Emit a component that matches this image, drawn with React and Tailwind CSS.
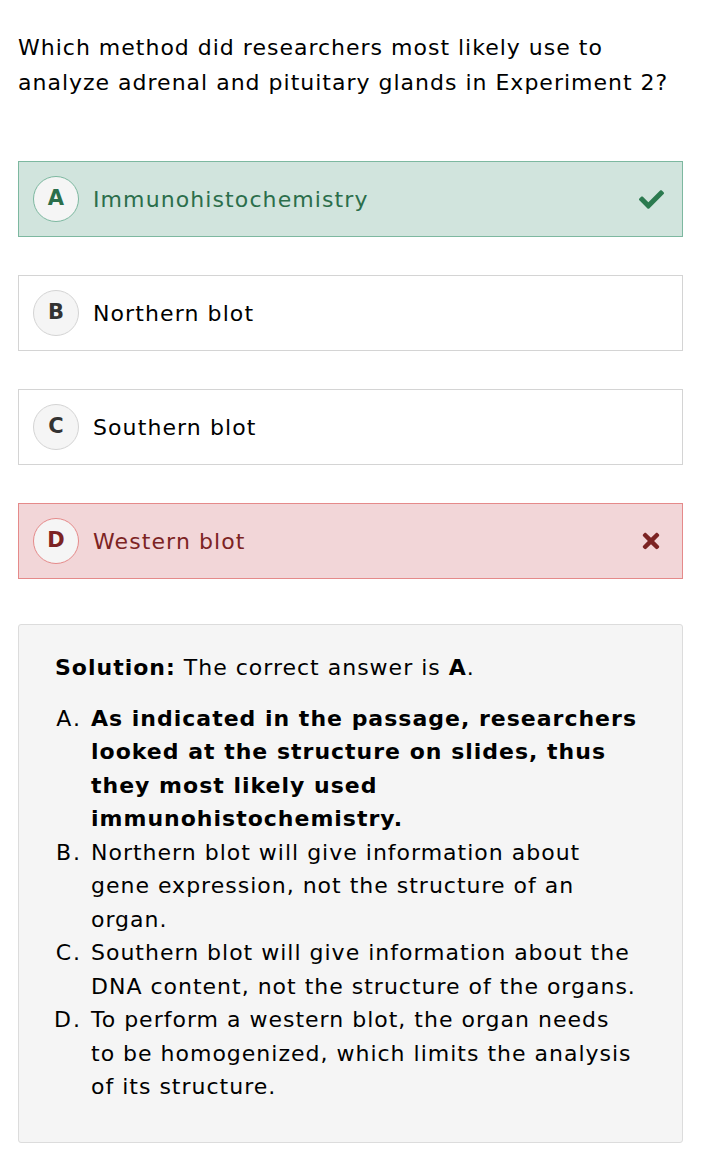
import { FaCheck, FaTimes } from "react-icons/fa";

const options = [
  { letter: "A", text: "Immunohistochemistry", state: "correct" },
  { letter: "B", text: "Northern blot", state: "none" },
  { letter: "C", text: "Southern blot", state: "none" },
  { letter: "D", text: "Western blot", state: "wrong" },
];

const Option = ({ letter, text, state }) => {
  let box = "border-[#d4d4d4] bg-white text-black";
  let circle = "border-[#d4d4d4] text-[#333]";
  if (state === "correct") {
    box = "border-[#7db8a0] bg-[#d1e4dd] text-[#2b6e4b]";
    circle = "border-[#7db8a0] text-[#2b6e4b]";
  }
  if (state === "wrong") {
    box = "border-[#e58a8a] bg-[#f2d6d8] text-[#7c2323]";
    circle = "border-[#e58a8a] text-[#7c2323]";
  }
  return (
    <div className={`flex items-center h-[76px] border px-[14px] ${box}`}>
      <div
        className={`w-[46px] h-[46px] rounded-full border bg-[#f5f5f5] flex items-center justify-center text-[21px] font-bold tracking-normal ${circle}`}
      >
        {letter}
      </div>
      <div className="ml-[14px] flex-1 text-[22px] tracking-[1.1px]">{text}</div>
      {state === "correct" && <FaCheck className="text-[#2b7a4f] w-[25px] h-[25px] mr-[4px]" />}
      {state === "wrong" && <FaTimes className="text-[#7c2323] w-[22px] h-[24px] mr-[6px]" />}
    </div>
  );
};

const App = () => {
  return (
    <div className="bg-white min-h-[1170px] pl-[18px] pr-[29px] pt-[30px] pb-[28px] font-['DejaVu_Sans',Verdana,sans-serif] text-black tracking-[1px]">
      <p className="text-[22px] leading-[35px]">
        Which method did researchers most likely use to analyze adrenal and
        pituitary glands in Experiment 2?
      </p>

      <div className="mt-[61px] flex flex-col gap-[38px]">
        {options.map((o) => (
          <Option key={o.letter} {...o} />
        ))}
      </div>

      <div className="mt-[45px] bg-[#f5f5f5] border border-[#dcdcdc] rounded-[3px] pl-[36px] pr-[44px] pt-[26px] pb-[38px] text-[22px] leading-[33.5px]">
        <p>
          <b>Solution:</b> The correct answer is <b>A</b>.
        </p>
        <ol className="mt-[17px] list-[upper-alpha] pl-[36px] marker:tracking-[2px]">
          <li>
            <b>
              As indicated in the passage, researchers looked at the structure
              on slides, thus they most likely used immunohistochemistry.
            </b>
          </li>
          <li>
            Northern blot will give information about gene expression, not the
            structure of an organ.
          </li>
          <li>
            Southern blot will give information about the DNA content, not the
            structure of the organs.
          </li>
          <li>
            To perform a western blot, the organ needs to be homogenized, which
            limits the analysis of its structure.
          </li>
        </ol>
      </div>
    </div>
  );
};

export default App;
